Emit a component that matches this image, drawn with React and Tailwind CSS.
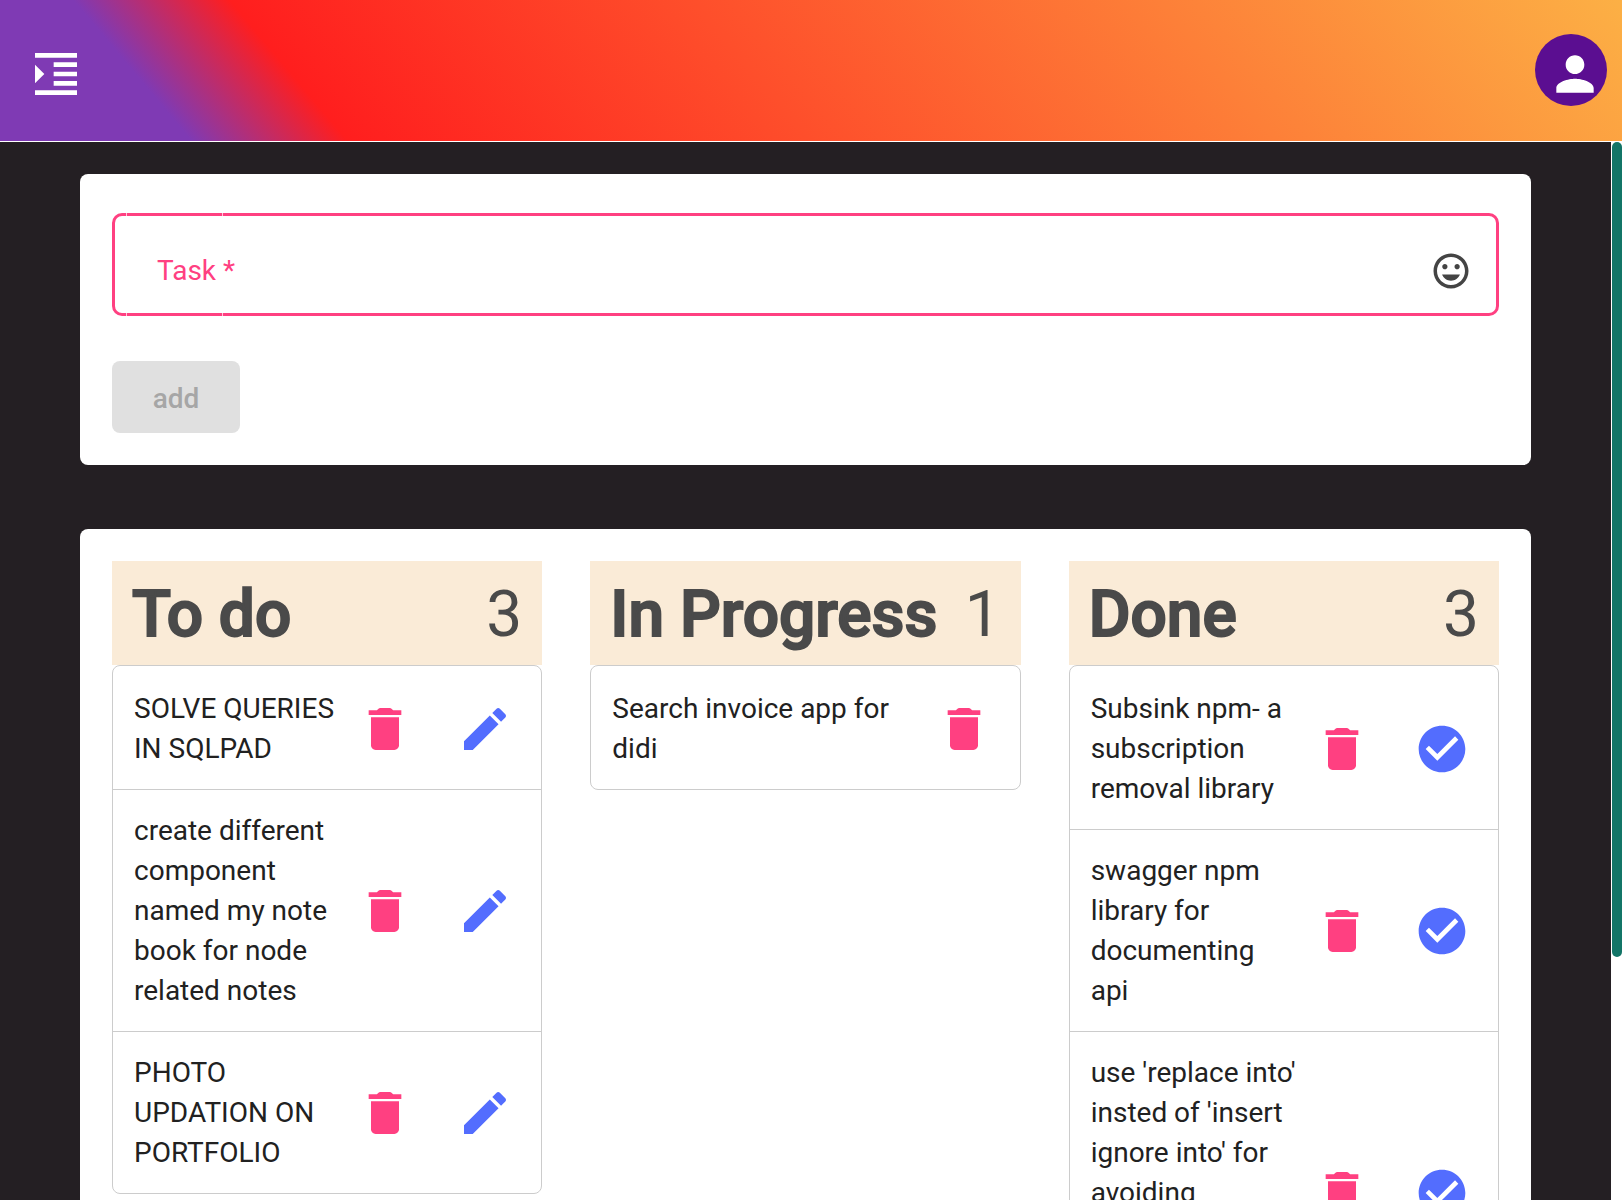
import React, { useState } from "react";

const paths = {
  indent:
    "M3 21h18v-2H3v2zM3 8v8l4-4-4-4zm8 9h10v-2H11v2zM3 3v2h18V3H3zm8 6h10V7H11v2zm0 4h10v-2H11v2z",
  person:
    "M12 12c2.21 0 4-1.79 4-4s-1.79-4-4-4-4 1.79-4 4 1.79 4 4 4zm0 2c-2.67 0-8 1.34-8 4v2h16v-2c0-2.66-5.33-4-8-4z",
  mood:
    "M11.99 2C6.47 2 2 6.48 2 12s4.47 10 9.99 10C17.52 22 22 17.52 22 12S17.52 2 11.99 2zM12 20c-4.42 0-8-3.58-8-8s3.58-8 8-8 8 3.58 8 8-3.58 8-8 8zm3.5-9c.83 0 1.5-.67 1.5-1.5S16.33 8 15.5 8 14 8.67 14 9.5s.67 1.5 1.5 1.5zm-7 0c.83 0 1.5-.67 1.5-1.5S9.33 8 8.5 8 7 8.67 7 9.5 7.67 11 8.5 11zm3.5 6.5c2.33 0 4.31-1.46 5.11-3.5H6.89c.8 2.04 2.78 3.5 5.11 3.5z",
  remove:
    "M6 19c0 1.1.9 2 2 2h8c1.1 0 2-.9 2-2V7H6v12zM19 4h-3.5l-.71-.71c-.18-.18-.44-.29-.7-.29H9.91c-.26 0-.52.11-.7.29L8.5 4H5v2h14V4z",
  edit:
    "M3 17.25V21h3.75L17.81 9.94l-3.75-3.75L3 17.25zM20.71 7.04c.39-.39.39-1.02 0-1.41l-2.34-2.34c-.39-.39-1.02-.39-1.41 0l-1.83 1.83 3.75 3.75 1.83-1.83z",
  done:
    "M12 2C6.48 2 2 6.48 2 12s4.48 10 10 10 10-4.48 10-10S17.52 2 12 2zm-2 15l-5-5 1.41-1.41L10 14.17l7.59-7.59L19 8l-9 9z",
};

function Icon({ name, className }) {
  return (
    <svg viewBox="0 0 24 24" fill="currentColor" aria-hidden="true" className={className}>
      <path d={paths[name]} />
    </svg>
  );
}

const columns = [
  {
    title: "To do",
    action: "edit",
    items: [
      { text: "SOLVE QUERIES IN SQLPAD" },
      { text: "create different component named my note book for node related notes" },
      { text: "PHOTO UPDATION ON PORTFOLIO" },
    ],
  },
  {
    title: "In Progress",
    action: null,
    items: [{ text: "Search invoice app for didi" }],
  },
  {
    title: "Done",
    action: "done",
    items: [
      { text: "Subsink npm- a subscription removal library" },
      { text: "swagger npm library for documenting api" },
      { text: "use 'replace into' insted of 'insert ignore into' for avoiding", tall: true },
    ],
  },
];

function TaskItem({ item, action }) {
  return (
    <li className="flex items-center border-b border-[#ccc] pt-[21px] pr-4 pb-5 pl-[21px] last:border-b-0">
      <p className={item.tall ? "min-h-[280px] min-w-0 flex-1" : "min-w-0 flex-1"}>{item.text}</p>
      <div className="ml-[5px] flex shrink-0 gap-5">
        <button type="button" aria-label="Delete task" className="flex h-20 w-20 items-center justify-center text-[#ff4081]">
          <Icon name="remove" className="size-14" />
        </button>
        {action && (
          <button
            type="button"
            aria-label={action === "edit" ? "Edit task" : "Task done"}
            className="flex h-20 w-20 items-center justify-center text-[#536dfe]"
          >
            <Icon name={action} className="size-14" />
          </button>
        )}
      </div>
    </li>
  );
}

function Column({ column }) {
  return (
    <section className="min-w-0">
      <header className="flex h-[104px] items-center justify-between bg-[#faebd7] px-5 pt-1 text-[64px] leading-none text-[#4a4a4a]">
        <h2 className="font-medium whitespace-nowrap [-webkit-text-stroke:2px_#4a4a4a]">{column.title}</h2>
        <span>{column.items.length}</span>
      </header>
      <ul className="rounded-lg border border-[#ccc] pt-[2px] text-[28px] leading-10 text-[#212121]">
        {column.items.map((item) => (
          <TaskItem key={item.text} item={item} action={column.action} />
        ))}
      </ul>
    </section>
  );
}

export default function App() {
  const [task, setTask] = useState("");
  return (
    <div className="flex h-screen flex-col overflow-hidden bg-white font-['Roboto',sans-serif]">
      <header className="flex h-[141px] shrink-0 items-center justify-between bg-[linear-gradient(50deg,#7f3ab4_11%,#ff1e1e_20%,#fcb045_100%)] pr-[15px] pl-7">
        <button type="button" aria-label="Open menu" className="mt-1.5 text-white">
          <Icon name="indent" className="size-14" />
        </button>
        <button type="button" aria-label="Account" className="mb-px size-[72px] rounded-full bg-[#5b0e91] pt-2 pl-3 text-white">
          <Icon name="person" className="size-14" />
        </button>
      </header>

      <div className="mt-px flex min-h-0 flex-1">
        <main className="flex min-w-0 flex-1 flex-col gap-16 overflow-hidden bg-[#241f23] px-20 pt-8">
          <form
            className="shrink-0 rounded-lg bg-white px-8 pt-[39px] pb-8"
            onSubmit={(event) => event.preventDefault()}
          >
            <div className="relative flex h-[103px] items-center rounded-[10px] border-3 border-[#ff4081] pt-3 pr-6 pl-[42px]">
              <span className="absolute -inset-y-[3px] left-[11px] w-px bg-white/70" />
              <span className="absolute -inset-y-[3px] left-[107px] w-px bg-white/70" />
              <label htmlFor="task" className="text-[28px] leading-10 text-[#ff4081]">
                Task *
              </label>
              <input
                id="task"
                value={task}
                onChange={(event) => setTask(event.target.value)}
                className="ml-4 min-w-0 flex-1 bg-transparent text-[28px] leading-10 text-[#212121] outline-none"
              />
              <button type="button" aria-label="Insert emoji" className="text-[#444]">
                <Icon name="mood" className="size-[42px]" />
              </button>
            </div>
            <button
              type="submit"
              disabled={!task}
              className="mt-[45px] flex h-[72px] w-32 items-center justify-center rounded-lg bg-[#e0e0e0] pt-1 text-[28px] font-medium text-[#a6a6a6]"
            >
              add
            </button>
          </form>

          <div className="grid shrink-0 grid-cols-3 items-start gap-12 rounded-lg bg-white p-8">
            {columns.map((column) => (
              <Column key={column.title} column={column} />
            ))}
          </div>
        </main>
        <div aria-hidden="true" className="w-[11px] shrink-0 bg-white pl-px">
          <div className="h-[77%] rounded-full bg-[#137567]" />
        </div>
      </div>
    </div>
  );
}
